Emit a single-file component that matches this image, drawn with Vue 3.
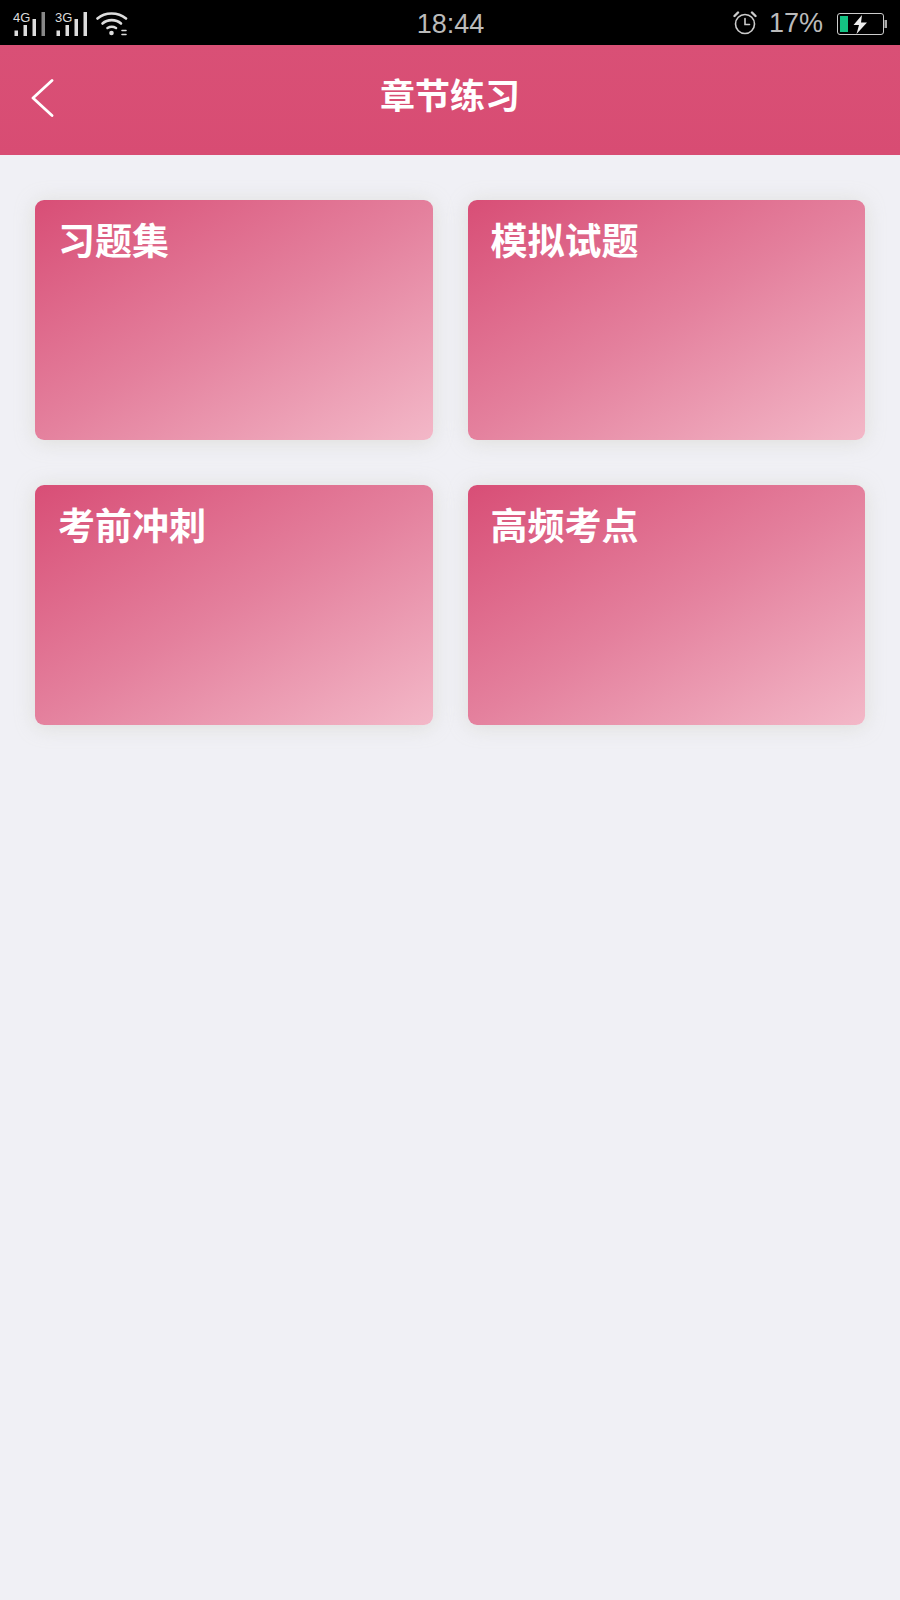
<template>
  <div class="page">
    <div class="status-bar">
      <div class="status-left">
        <div class="signal">
          <span class="net">4G</span>
          <svg width="33" height="24" viewBox="0 0 33 24">
            <rect x="0.500" y="18.500" width="3.500" height="5.500" fill="#ddd" />
            <rect x="9.500" y="13" width="3.500" height="11" fill="#ddd" />
            <rect x="18.500" y="7" width="3.500" height="17" fill="#ddd" />
            <rect x="27.500" y="0" width="3.500" height="24" fill="#888" />
          </svg>
        </div>
        <div class="signal">
          <span class="net">3G</span>
          <svg width="33" height="24" viewBox="0 0 33 24">
            <rect x="0.500" y="18.500" width="3.500" height="5.500" fill="#ddd" />
            <rect x="9.500" y="13" width="3.500" height="11" fill="#ddd" />
            <rect x="18.500" y="7" width="3.500" height="17" fill="#ddd" />
            <rect x="27.500" y="0" width="3.500" height="24" fill="#ddd" />
          </svg>
        </div>
        <svg class="wifi" width="32" height="25" viewBox="0 0 32 25" fill="none" stroke="#ddd" stroke-width="2.600" stroke-linecap="round">
          <path d="M1.500 7.500C9 .8 22 .8 30 7.500" />
          <path d="M6.500 12.500C11.500 8 20 8 25 12.500" />
          <path d="M11.500 17C14 15.500 17.500 15.500 20 17" />
          <circle cx="15.500" cy="22" r="2.300" fill="#ddd" stroke="none" />
          <path d="M26 19.500h4M26 23.500h4" stroke-width="1.600" />
        </svg>
      </div>
      <div class="clock">18:44</div>
      <div class="status-right">
        <svg class="alarm" width="24" height="24" viewBox="0 0 24 24" fill="none" stroke="#ccc" stroke-width="1.600" stroke-linecap="round">
          <circle cx="12" cy="13" r="9.500" />
          <path d="M12 7.500v6h4.500" />
          <path d="M1.500 5L5 1.500M22.500 5L19 1.500" stroke-width="2.400" />
        </svg>
        <span class="percent">17%</span>
        <svg width="50" height="22" viewBox="0 0 50 22">
          <rect x="0.500" y="0.500" width="46" height="21" rx="2.500" fill="none" stroke="#ccc" />
          <rect x="3" y="3" width="8" height="16" fill="#14c283" />
          <rect x="47.500" y="7" width="2.500" height="8" fill="#aaa" />
          <path d="M25 2L16.500 12H22L19.500 21L30 9.500H24L25 2z" fill="#eee" />
        </svg>
      </div>
    </div>

    <div class="header">
      <svg class="back" width="24" height="38" viewBox="0 0 24 38" fill="none" stroke="#fff" stroke-width="2.800" stroke-linecap="round" stroke-linejoin="round">
        <path d="M21 1.500L2 19L21 36.500" />
      </svg>
      <h1>章节练习</h1>
    </div>

    <div class="grid">
      <div v-for="item in items" :key="item" class="card">{{ item }}</div>
    </div>
  </div>
</template>

<script setup>
const items = ['习题集', '模拟试题', '考前冲刺', '高频考点']
</script>

<style scoped>
.page {
  width: 900px;
  height: 1600px;
  background: #f0f0f5;
  font-family: "Liberation Sans", "Noto Sans CJK SC", sans-serif;
}

.status-bar {
  height: 45px;
  background: #000;
  color: #bbb;
  display: grid;
  grid-template-columns: 1fr auto 1fr;
  align-items: center;
  padding: 0 13px 0 14px;
  box-sizing: border-box;
}

.status-left {
  display: flex;
  align-items: center;
  gap: 9px;
}

.signal {
  position: relative;
  width: 33px;
  height: 24px;
}

.net {
  position: absolute;
  left: -1px;
  top: -1px;
  font-size: 13px;
  line-height: 13px;
  color: #ddd;
}

.wifi {
  margin-left: -2px;
}

.clock {
  font-size: 27px;
  line-height: 45px;
  padding-top: 2px;
}

.status-right {
  display: flex;
  align-items: center;
  justify-content: flex-end;
  gap: 14px;
}

.alarm {
  margin: -2px -2px 0 0;
}

.percent {
  font-size: 27px;
}

.header {
  height: 110px;
  box-sizing: border-box;
  padding-bottom: 13px;
  background: linear-gradient(180deg, #d95076, #d84c73);
  display: flex;
  align-items: center;
  justify-content: center;
  position: relative;
}

.back {
  position: absolute;
  left: 31px;
  top: 34px;
}

h1 {
  margin: 0;
  font-size: 35px;
  font-weight: 700;
  color: #fff;
}

.grid {
  display: grid;
  grid-template-columns: 1fr 1fr;
  gap: 45px 35px;
  padding: 45px 35px;
}

.card {
  height: 240px;
  box-sizing: border-box;
  padding: 19px 23px;
  border-radius: 9px;
  background: linear-gradient(150deg, #d84e76 0%, #e4809d 50%, #f3b8c8 100%);
  box-shadow: 0 2px 20px rgba(190, 190, 170, 0.35);
  color: #fff;
  font-size: 37px;
  font-weight: 700;
  line-height: 48px;
}
</style>

<style>
html, body {
  background: #f0f0f5;
}
</style>
